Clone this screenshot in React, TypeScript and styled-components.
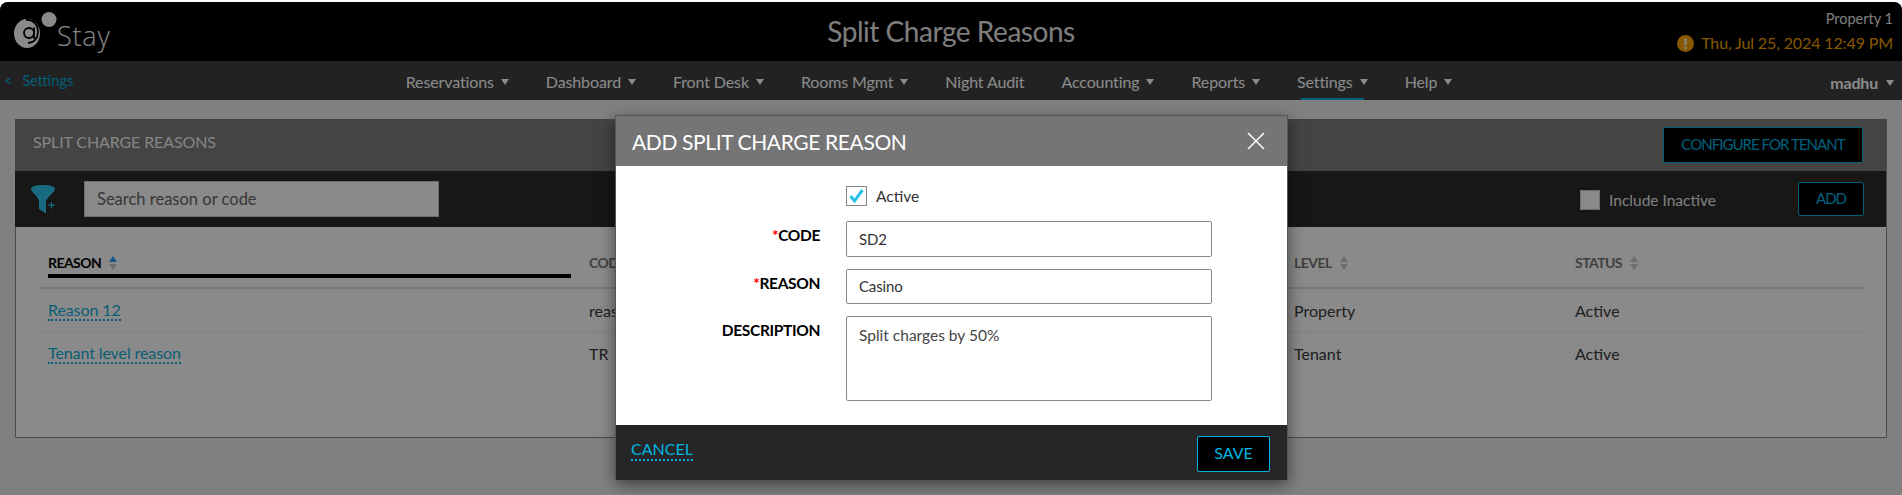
import React from "react";
import styled, { createGlobalStyle } from "styled-components";

const Global = createGlobalStyle`
  html, body { margin: 0; padding: 0; background: #fff; }
  body { font-family: Lato, "Open Sans", sans-serif; overflow: hidden; }
  * { box-sizing: border-box; }
`;

const Frame = styled.div`
  position: relative;
  width: 1902px;
  height: 495px;
  padding-top: 2px;
  background: #fff;
  overflow: hidden;
`;
const Page = styled.div`
  height: 493px;
  border-radius: 8px 8px 0 0;
  overflow: hidden;
  background: #ededed;
  display: flex;
  flex-direction: column;
`;
const TopBar = styled.header`
  height: 59px;
  flex: none;
  background: #000;
  display: grid;
  grid-template-columns: 1fr auto 1fr;
  align-items: start;
  padding: 0 9px;
`;
const Brand = styled.div`
  display: flex;
  align-items: flex-start;
  gap: 0;
  margin-left: 5px;
  padding-top: 10px;
  svg { flex: none; }
`;
const BrandName = styled.span`
  font-size: 27px;
  font-family: "Open Sans", sans-serif;
  font-weight: 300;
  letter-spacing: 0.8px;
  line-height: 36px;
  color: #f6f6f6;
  margin-top: 6px;
`;
const PageTitle = styled.h1`
  margin: 0;
  font-size: 28px;
  font-weight: 400;
  letter-spacing: -0.45px;
  line-height: 58px;
  color: #e8e8e8;
`;
const TopRight = styled.div`
  justify-self: end;
  display: flex;
  flex-direction: column;
  align-items: flex-end;
  padding-top: 8px;
`;
const PropertyName = styled.div`
  font-size: 14.5px;
  line-height: 18px;
  color: #e8e8e8;
`;
const DateLine = styled.div`
  display: flex;
  align-items: center;
  gap: 7px;
  margin-top: 5px;
  font-size: 16px;
  letter-spacing: -0.12px;
  line-height: 20px;
  color: #f5a300;
`;
const NavBar = styled.nav`
  position: relative;
  height: 39px;
  flex: none;
  background: #3f3f3f;
  display: flex;
  align-items: center;
  justify-content: center;
  padding-right: 44px;
`;
const Back = styled.a`
  position: absolute;
  left: 4px;
  top: 11px;
  font-size: 14.5px;
  line-height: 18px;
  color: #00b0dc;
  span { margin-right: 10px; }
`;
const User = styled.div`
  position: absolute;
  right: 8px;
  top: 12px;
  display: flex;
  gap: 8px;
  align-items: center;
  font-size: 16px;
  font-weight: 700;
  letter-spacing: -0.2px;
  line-height: 20px;
  color: #fff;
`;
const NavItems = styled.div`
  display: flex;
  gap: 37px;
`;
const NavItem = styled.div<{ $active?: boolean }>`
  position: relative;
  display: flex;
  align-items: center;
  gap: 7px;
  padding-top: 3px;
  font-size: 16px;
  letter-spacing: -0.12px;
  line-height: 36px;
  color: #fff;
  ${(p) => p.$active && `
    &::after {
      content: "";
      position: absolute;
      left: 4px;
      right: 4px;
      bottom: 0;
      height: 2px;
      background: #00b5e2;
    }
  `}
`;
const Caret = styled.i`
  width: 0;
  height: 0;
  border-left: 4.5px solid transparent;
  border-right: 4.5px solid transparent;
  border-top: 6px solid currentColor;
`;
const Content = styled.main`
  flex: 1;
  padding: 19px 15px 0;
`;
const Panel = styled.section`
  width: 100%;
  height: 319px;
  background: #fff;
  border: 1px solid #8c8c8c;
  border-top: 0;
`;
const PanelHead = styled.div`
  height: 52px;
  background: #7e7e7e;
  display: flex;
  align-items: center;
  justify-content: space-between;
  padding: 0 23px 0 18px;
  margin: 0 0 0 -1px;
`;
const PanelTitle = styled.h2`
  margin: 0 0 7px;
  font-size: 16px;
  font-weight: 400;
  letter-spacing: -0.12px;
  color: #f4f4f4;
`;
const OutlineButton = styled.button<{ $w: number; $h: number }>`
  width: ${(p) => p.$w}px;
  height: ${(p) => p.$h}px;
  background: #000;
  border: 1px solid #00b5e2;
  border-radius: 2px;
  color: #00b5e2;
  font-family: inherit;
  font-size: 15px;
  letter-spacing: -0.95px;
  padding: 0 0 3px;
`;
const ToolRow = styled.div`
  position: relative;
  height: 56px;
  background: #2b2b2b;
  display: flex;
  align-items: center;
  padding: 0 22px 0 16px;
  margin-left: -1px;
`;
const SearchBox = styled.input`
  width: 355px;
  height: 36px;
  margin-left: 29px;
  background: #fff;
  border: 1px solid #ccc;
  padding: 0 12px;
  font-family: inherit;
  font-size: 16.5px;
  color: #555;
  &::placeholder { color: #666; opacity: 1; }
`;
const InactiveWrap = styled.label`
  margin-left: auto;
  margin-right: 82px;
  margin-top: 2px;
  display: flex;
  align-items: center;
  gap: 9px;
  font-size: 15.5px;
  color: #ececec;
`;
const EmptyCheck = styled.span`
  width: 20px;
  height: 20px;
  background: #fff;
  border: 1px solid #ccc;
`;
const TableArea = styled.div`
  padding: 18px 22px 0 23px;
`;
const Row = styled.div<{ $head?: boolean }>`
  display: grid;
  grid-template-columns: 541px 705px 281px 1fr;
  height: ${(p) => (p.$head ? "44px" : "43px")};
  border-bottom: ${(p) => (p.$head ? "2px solid #e0e0e0" : "1px solid #f0f0f0")};
  align-items: center;
  padding-left: 9px;
  &:last-child { border-bottom: 0; }
`;
const HeadCell = styled.div<{ $sorted?: boolean }>`
  position: relative;
  display: flex;
  align-items: center;
  gap: 8px;
  height: 42px;
  padding-bottom: 7px;
  font-size: 14px;
  font-weight: 700;
  letter-spacing: -0.55px;
  color: ${(p) => (p.$sorted ? "#000" : "#777")};
  ${(p) => p.$sorted && `
    &::after {
      content: "";
      position: absolute;
      left: 0;
      width: 523px;
      bottom: 9px;
      height: 4px;
      background: #000;
    }
  `}
`;
const SortIcon = styled.span<{ $on?: boolean }>`
  display: inline-flex;
  flex-direction: column;
  gap: 2px;
  &::before, &::after { content: ""; width: 0; height: 0; border-left: 4.5px solid transparent; border-right: 4.5px solid transparent; }
  &::before { border-bottom: 6px solid ${(p) => (p.$on ? "#2e9ef5" : "#ccc")}; }
  &::after { border-top: 6px solid #ccc; }
`;
const LinkCell = styled.a`
  justify-self: start;
  font-size: 16px;
  letter-spacing: -0.1px;
  line-height: 19px;
  color: #12b0d8;
  border-bottom: 2px dotted #12b0d8;
`;
const Cell = styled.div`
  font-size: 16px;
  color: #3a3a3a;
`;
const Overlay = styled.div`
  position: absolute;
  inset: 2px 0 0;
  border-radius: 8px 8px 0 0;
  background: rgba(0, 0, 0, 0.46);
`;
const Modal = styled.div`
  position: absolute;
  left: 615px;
  top: 115px;
  width: 673px;
  height: 365px;
  display: flex;
  flex-direction: column;
  border: 1px solid #555;
  border-bottom: 0;
  background: #fff;
  box-shadow: 0 5px 15px rgba(0, 0, 0, 0.5);
`;
const ModalHead = styled.div`
  height: 50px;
  flex: none;
  background: #757575;
  display: flex;
  align-items: center;
  justify-content: space-between;
  padding: 0 22px 0 16px;
`;
const ModalTitle = styled.h3`
  margin: 1px 0 0;
  font-size: 21px;
  font-weight: 400;
  letter-spacing: -0.38px;
  color: #fff;
`;
const ModalBody = styled.div`
  flex: 1;
  display: grid;
  grid-template-columns: 204px 366px;
  column-gap: 26px;
  align-content: start;
  padding: 17px 0 0;
`;
const CheckLine = styled.div`
  grid-column: 2;
  display: flex;
  align-items: center;
  gap: 9px;
  height: 26px;
  margin-bottom: 12px;
  font-size: 15.5px;
  color: #333;
`;
const CheckBox = styled.span`
  width: 21px;
  height: 20px;
  border: 1px solid #888;
  display: flex;
  align-items: center;
  justify-content: center;
`;
const Label = styled.label`
  text-align: right;
  font-size: 15.5px;
  font-weight: 700;
  letter-spacing: -0.35px;
  color: #000;
  line-height: 20px;
  padding-top: 4px;
  b { color: #f00; font-weight: 700; }
`;
const Input = styled.input<{ $h: number }>`
  width: 366px;
  height: ${(p) => p.$h}px;
  margin-bottom: 12px;
  border: 1px solid #888;
  border-radius: 2px;
  padding: 0 12px 1px;
  font-family: inherit;
  font-size: 15px;
  letter-spacing: -0.15px;
  color: #333;
  background: #fff;
`;
const Area = styled.textarea`
  width: 366px;
  height: 85px;
  border: 1px solid #888;
  border-radius: 2px;
  padding: 9px 12px;
  font-family: inherit;
  font-size: 15.5px;
  color: #444;
  resize: none;
`;
const ModalFoot = styled.div`
  height: 55px;
  flex: none;
  background: #262626;
  display: flex;
  align-items: center;
  justify-content: space-between;
  padding: 0 17px 0 15px;
`;
const CancelLink = styled.a`
  font-size: 16px;
  line-height: 20px;
  color: #00b5e2;
  border-bottom: 2px dotted #00b5e2;
  margin-top: -6px;
`;
const SaveButton = styled.button`
  width: 73px;
  height: 36px;
  margin-top: 2px;
  background: #000;
  border: 1px solid #00b5e2;
  border-radius: 2px;
  color: #00b5e2;
  font-family: inherit;
  font-size: 16px;
  padding: 0 0 2px;
`;
const CloseButton = styled.button`
  background: none;
  border: 0;
  padding: 0;
  display: flex;
`;

const nav: [string, boolean][] = [
  ["Reservations", true],
  ["Dashboard", true],
  ["Front Desk", true],
  ["Rooms Mgmt", true],
  ["Night Audit", false],
  ["Accounting", true],
  ["Reports", true],
  ["Settings", true],
  ["Help", true],
];

export default function App() {
  return (
    <Frame>
      <Global />
      <Page>
        <TopBar>
          <Brand>
            <svg width="43" height="37" viewBox="0 0 43 37">
              <circle cx="35" cy="7.500" r="7.500" fill="#fff" />
              <ellipse cx="13" cy="21.500" rx="13" ry="14.500" fill="#fff" />
              <path d="M12 8c7-1 12 5 12 12 0 6-4 11-10 11" stroke="#000" strokeWidth="1.800" fill="none" />
              <circle cx="15" cy="21" r="5" stroke="#000" strokeWidth="1.800" fill="none" />
              <path d="M20 15.500V27" stroke="#000" strokeWidth="1.800" fill="none" />
            </svg>
            <BrandName>Stay</BrandName>
          </Brand>
          <PageTitle>Split Charge Reasons</PageTitle>
          <TopRight>
            <PropertyName>Property 1</PropertyName>
            <DateLine>
              <svg width="17" height="17" viewBox="0 0 17 17">
                <circle cx="8.500" cy="8.500" r="8.500" fill="#f5a300" />
                <rect x="7" y="3" width="3" height="7.500" rx="1.500" fill="#f3e6c8" />
                <circle cx="8.500" cy="13" r="1.600" fill="#f3e6c8" />
              </svg>
              Thu, Jul 25, 2024 12:49 PM
            </DateLine>
          </TopRight>
        </TopBar>
        <NavBar>
          <Back><span>&lt;</span>Settings</Back>
          <NavItems>
            {nav.map(([n, c]) => (
              <NavItem key={n} $active={n === "Settings"}>
                {n}
                {c && <Caret />}
              </NavItem>
            ))}
          </NavItems>
          <User>madhu<Caret /></User>
        </NavBar>
        <Content>
          <Panel>
            <PanelHead>
              <PanelTitle>SPLIT CHARGE REASONS</PanelTitle>
              <OutlineButton $w={200} $h={36}>CONFIGURE FOR TENANT</OutlineButton>
            </PanelHead>
            <ToolRow>
              <svg width="24" height="29" viewBox="0 0 24 29">
                <path fill="#2fc6ee" d="M0 4C0 1 6 0 12 0s12 1 12 4c0 3-7 7-9 12v12.500L8 24v-8C7 11 0 7 0 4z" />
                <path stroke="#2fc6ee" strokeWidth="1.300" d="M20.500 17v6.500M17.200 20.200h6.500" />
              </svg>
              <SearchBox placeholder="Search reason or code" />
              <InactiveWrap><EmptyCheck />Include Inactive</InactiveWrap>
              <OutlineButton $w={66} $h={34}>ADD</OutlineButton>
            </ToolRow>
            <TableArea>
              <Row $head>
                <HeadCell $sorted>REASON <SortIcon $on /></HeadCell>
                <HeadCell>CODE <SortIcon /></HeadCell>
                <HeadCell>LEVEL <SortIcon /></HeadCell>
                <HeadCell>STATUS <SortIcon /></HeadCell>
              </Row>
              <Row>
                <LinkCell>Reason 12</LinkCell>
                <Cell>reason12</Cell>
                <Cell>Property</Cell>
                <Cell>Active</Cell>
              </Row>
              <Row>
                <LinkCell>Tenant level reason</LinkCell>
                <Cell>TR</Cell>
                <Cell>Tenant</Cell>
                <Cell>Active</Cell>
              </Row>
            </TableArea>
          </Panel>
        </Content>
      </Page>
      <Overlay />
      <Modal>
        <ModalHead>
          <ModalTitle>ADD SPLIT CHARGE REASON</ModalTitle>
          <CloseButton aria-label="Close">
            <svg width="18" height="18" viewBox="0 0 18 18">
              <path d="M1 1l16 16M17 1L1 17" stroke="#fff" strokeWidth="1.500" fill="none" />
            </svg>
          </CloseButton>
        </ModalHead>
        <ModalBody>
          <CheckLine>
            <CheckBox>
              <svg width="15" height="14" viewBox="0 0 15 14">
                <path d="M1.500 7l4 5L13.500 1" stroke="#2cc0e8" strokeWidth="3" fill="none" />
              </svg>
            </CheckBox>
            Active
          </CheckLine>
          <Label><b>*</b>CODE</Label>
          <Input $h={36} defaultValue="SD2" />
          <Label><b>*</b>REASON</Label>
          <Input $h={35} defaultValue="Casino" />
          <Label>DESCRIPTION</Label>
          <Area defaultValue="Split charges by 50%" />
        </ModalBody>
        <ModalFoot>
          <CancelLink>CANCEL</CancelLink>
          <SaveButton>SAVE</SaveButton>
        </ModalFoot>
      </Modal>
    </Frame>
  );
}
